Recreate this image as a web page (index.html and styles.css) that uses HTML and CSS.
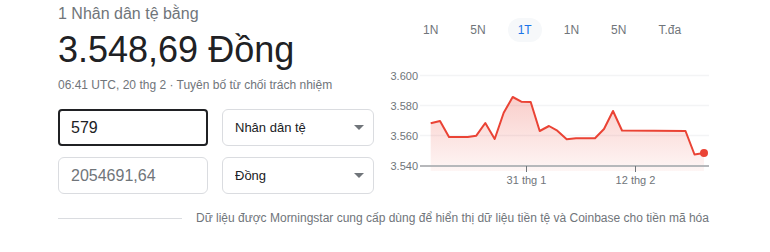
FILE: index.html
```html
<!DOCTYPE html>
<html lang="vi">
<head>
    <meta charset="UTF-8">
    <meta name="viewport" content="width=device-width, initial-scale=1.0">
    <title>Chuyển đổi tiền tệ</title>
    <link rel="stylesheet" href="styles.css">
</head>
<body>
    <div class="converter">
        <div class="top">
            <div class="summary">
                <div class="label">1 Nhân dân tệ bằng</div>
                <div class="value">3.548,69 Đồng</div>
                <div class="meta">06:41 UTC, 20 thg 2 · Tuyên bố từ chối trách nhiệm</div>

                <div class="row">
                    <input class="amount active" type="text" value="579">
                    <div class="select-wrap">
                        <select class="currency">
                            <option>Nhân dân tệ</option>
                        </select>
                    </div>
                </div>
                <div class="row">
                    <input class="amount result" type="text" value="2054691,64">
                    <div class="select-wrap">
                        <select class="currency">
                            <option>Đồng</option>
                        </select>
                    </div>
                </div>
            </div>

            <div class="chart-area">
                <div class="tabs">
                    <span class="tab">1N</span>
                    <span class="tab">5N</span>
                    <span class="tab selected">1T</span>
                    <span class="tab">1N</span>
                    <span class="tab">5N</span>
                    <span class="tab">T.đa</span>
                </div>

                <svg class="chart" width="335" height="130" viewBox="385 60 335 130">
                    <defs>
                        <linearGradient id="fillGrad" x1="0" y1="0" x2="0" y2="1">
                            <stop offset="0" stop-color="#ea4335" stop-opacity="0.26"/>
                            <stop offset="1" stop-color="#ea4335" stop-opacity="0.05"/>
                        </linearGradient>
                    </defs>
                    <!-- grid -->
                    <line class="grid" x1="420" y1="75.5" x2="709" y2="75.5"/>
                    <line class="grid" x1="420" y1="105.5" x2="709" y2="105.5"/>
                    <line class="grid" x1="420" y1="135.5" x2="709" y2="135.5"/>
                    <text class="ylabel" x="418" y="79.5">3.600</text>
                    <text class="ylabel" x="418" y="109.5">3.580</text>
                    <text class="ylabel" x="418" y="139.5">3.560</text>
                    <text class="ylabel" x="418" y="170">3.540</text>

                    <polygon class="area" points="430.7,123.3 440,121 449,137 467.7,137 476.3,135.7 485.3,123 494.7,139 503.7,112.7 512.7,97 521.3,101.7 530.7,102 539.7,131 549,126 557.3,130.7 566.7,139.3 576,138.3 595,138.3 604,129 613,111 622,130.5 685.5,131 694.5,154.5 704,153 704,171 430.7,171"/>
                    <line class="axis" x1="420" y1="166" x2="709" y2="166"/>
                    <line class="tick" x1="526.5" y1="166" x2="526.5" y2="172"/>
                    <line class="tick" x1="635.5" y1="166" x2="635.5" y2="172"/>
                    <polyline class="line" points="430.7,123.3 440,121 449,137 467.7,137 476.3,135.7 485.3,123 494.7,139 503.7,112.7 512.7,97 521.3,101.7 530.7,102 539.7,131 549,126 557.3,130.7 566.7,139.3 576,138.3 595,138.3 604,129 613,111 622,130.5 685.5,131 694.5,154.5 704,153"/>
                    <circle class="dot" cx="704" cy="153" r="4"/>

                    <text class="xlabel" x="526.5" y="183.5">31 thg 1</text>
                    <text class="xlabel" x="635.5" y="183.5">12 thg 2</text>
                </svg>
            </div>
        </div>

        <div class="footer">
            <div class="divider"></div>
            <div class="source">Dữ liệu được Morningstar cung cấp dùng để hiển thị dữ liệu tiền tệ và Coinbase cho tiền mã hóa</div>
        </div>
    </div>
</body>
</html>
```

FILE: styles.css
```css
body {
    font-family: Arial, "Liberation Sans", sans-serif;
    background-color: #fff;
    color: #202124;
    margin: 0;
    padding: 0;
}

.converter {
    padding: 4px 0 0 58px;
}

.top {
    display: flex;
    gap: 11px;
}

.summary {
    width: 316px;
}

.label {
    font-size: 16px;
    line-height: 20px;
    color: #70757a;
}

.value {
    font-size: 36px;
    line-height: 44px;
    margin-top: 4px;
    color: #202124;
}

.meta {
    font-size: 12px;
    line-height: 16px;
    margin-top: 5px;
    color: #70757a;
}

.row {
    display: flex;
    gap: 14px;
    margin-top: 16px;
}

.row + .row {
    margin-top: 11px;
}

.amount {
    box-sizing: border-box;
    width: 150px;
    height: 37px;
    padding: 0 12px;
    font-family: inherit;
    font-size: 16px;
    border: 1px solid #dadce0;
    border-radius: 6px;
    outline: none;
    color: #70757a;
}

.amount.active {
    border: 2px solid #202124;
    border-radius: 4px;
    padding-left: 11px;
    color: #202124;
}

.select-wrap {
    position: relative;
    width: 152px;
}

.select-wrap::after {
    content: "";
    position: absolute;
    right: 10px;
    top: 16px;
    border-left: 5px solid transparent;
    border-right: 5px solid transparent;
    border-top: 5px solid #70757a;
    pointer-events: none;
}

.currency {
    -webkit-appearance: none;
    appearance: none;
    box-sizing: border-box;
    width: 100%;
    height: 37px;
    padding: 0 30px 0 12px;
    font-family: inherit;
    font-size: 13px;
    color: #202124;
    background: #fff;
    border: 1px solid #dadce0;
    border-radius: 6px;
    outline: none;
}

.chart-area {
    width: 335px;
}

.tabs {
    display: flex;
    gap: 12px;
    padding-left: 28px;
    margin-top: 14px;
}

.tab {
    font-size: 12px;
    line-height: 24px;
    padding: 0 10px;
    border-radius: 12px;
    color: #70757a;
}

.tab.selected {
    background-color: #f6f8fa;
    color: #1a73e8;
}

.chart {
    display: block;
    margin-top: 18px;
    overflow: visible;
}

.grid {
    stroke: #f3f4f5;
    stroke-width: 1.5;
}

.axis {
    stroke: #b6b8bb;
    stroke-width: 2;
}

.tick {
    stroke: #70757a;
    stroke-width: 1;
}

.area {
    fill: url(#fillGrad);
}

.line {
    fill: none;
    stroke: #ea4335;
    stroke-width: 2;
    stroke-linejoin: round;
}

.dot {
    fill: #ea4335;
}

.ylabel {
    font-size: 11px;
    fill: #70757a;
    text-anchor: end;
}

.xlabel {
    font-size: 11px;
    fill: #70757a;
    text-anchor: middle;
}

.footer {
    display: flex;
    align-items: center;
    gap: 14px;
    margin-top: 16px;
}

.divider {
    width: 124px;
    height: 1px;
    background-color: #dadce0;
}

.source {
    font-size: 12px;
    line-height: 16px;
    color: #70757a;
}
```
